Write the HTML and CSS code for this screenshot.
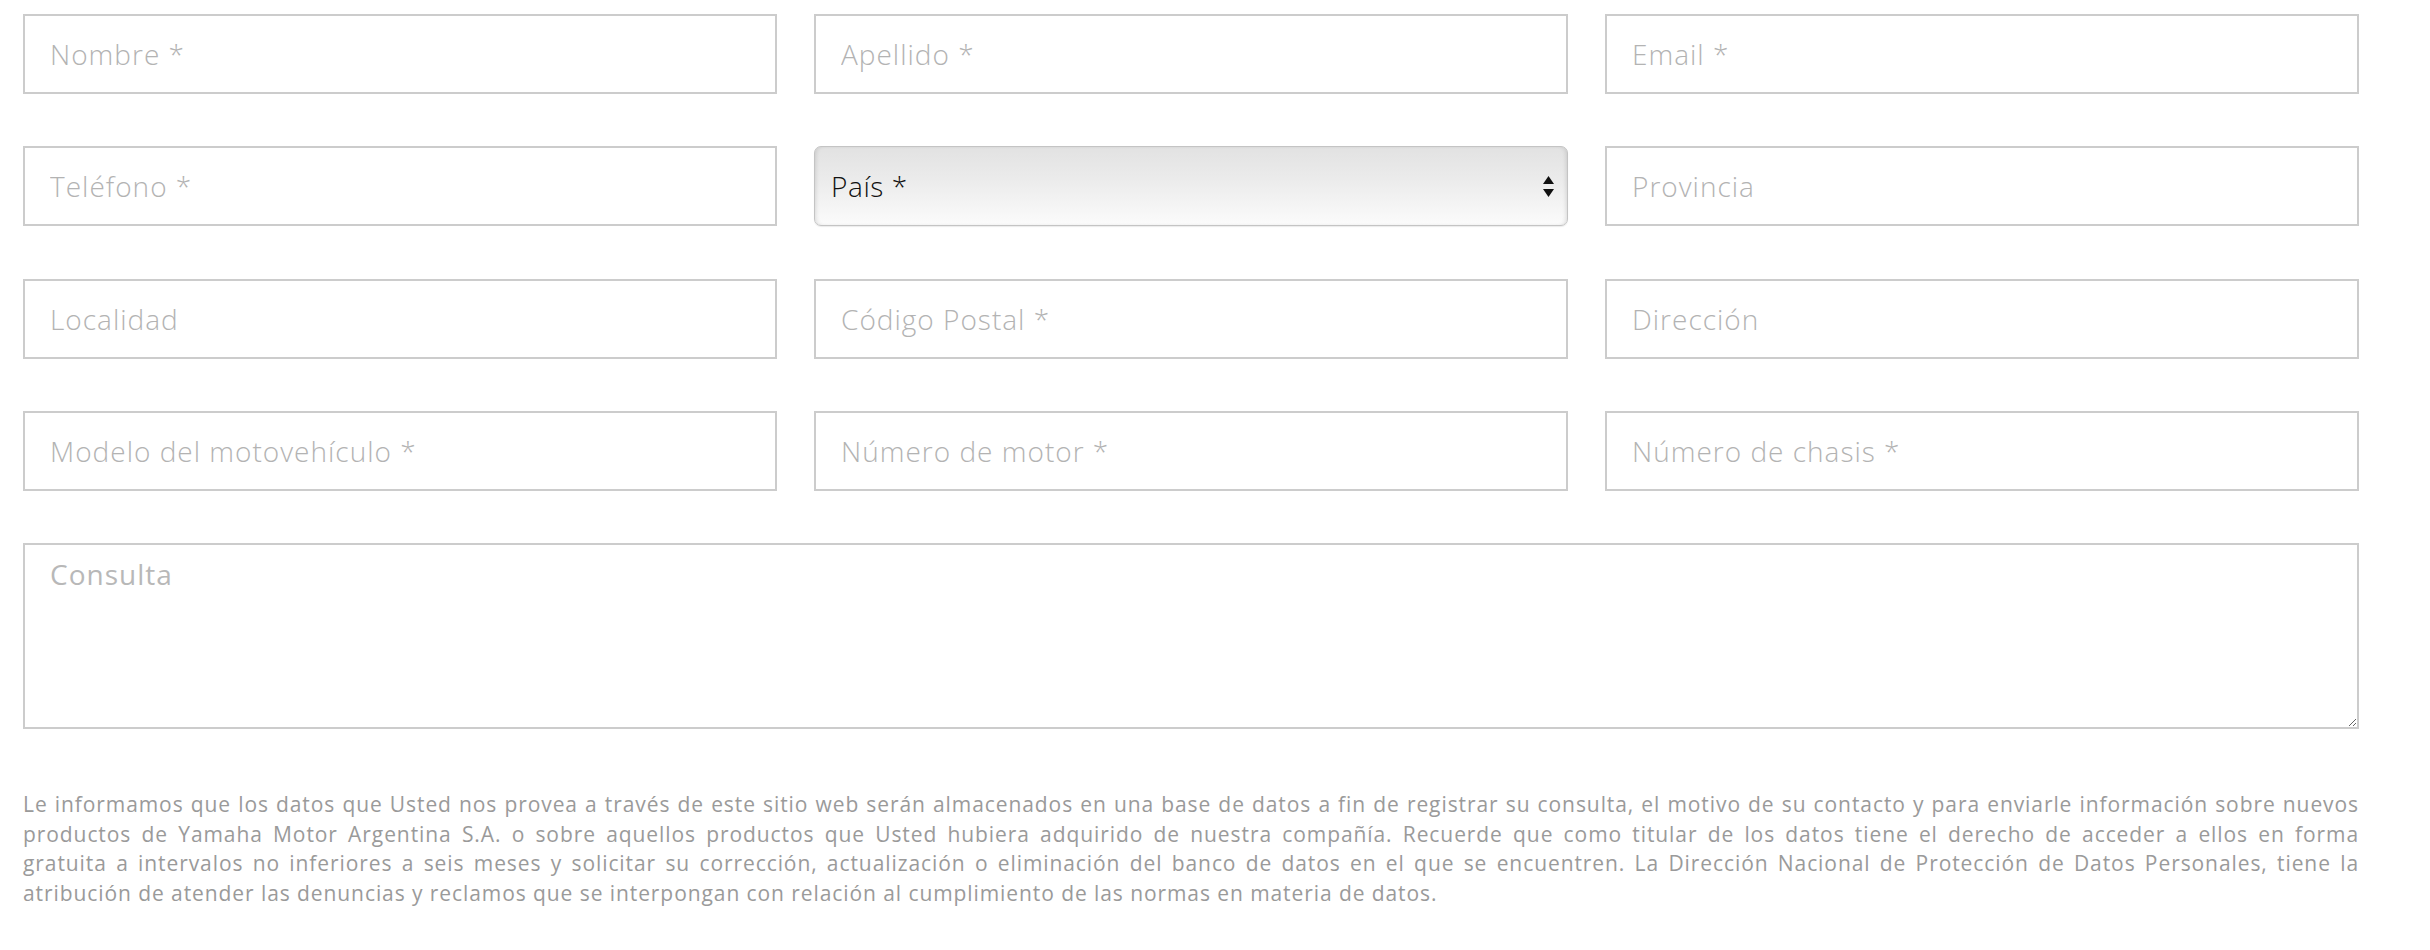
FILE: index.html
```html
<!DOCTYPE html>
<html lang="es">
<head>
<meta charset="utf-8">
<title>Contacto</title>
<link rel="stylesheet" href="styles.css">
</head>
<body>
<form class="form">
  <div class="grid">
    <input class="field" type="text" placeholder="Nombre *">
    <input class="field" type="text" placeholder="Apellido *">
    <input class="field" type="text" placeholder="Email *">
    <input class="field" type="text" placeholder="Teléfono *">
    <div class="select-wrap">
      <select class="select">
        <option>País *</option>
      </select>
      <svg class="select-arrow" width="11" height="21" viewBox="0 0 11 21" aria-hidden="true">
        <polygon points="5.5,0 11,8 0,8" fill="#111"/>
        <polygon points="0,13 11,13 5.5,21" fill="#111"/>
      </svg>
    </div>
    <input class="field" type="text" placeholder="Provincia">
    <input class="field" type="text" placeholder="Localidad">
    <input class="field" type="text" placeholder="Código Postal *">
    <input class="field" type="text" placeholder="Dirección">
    <input class="field" type="text" placeholder="Modelo del motovehículo *">
    <input class="field" type="text" placeholder="Número de motor *">
    <input class="field" type="text" placeholder="Número de chasis *">
  </div>
  <textarea class="message" placeholder="Consulta"></textarea>
  <p class="legal">
    <span class="ln">Le informamos que los datos que Usted nos provea a través de este sitio web serán almacenados en una base de datos a fin de registrar su consulta, el motivo de su contacto y para enviarle información sobre nuevos</span>
    <span class="ln">productos de Yamaha Motor Argentina S.A. o sobre aquellos productos que Usted hubiera adquirido de nuestra compañía. Recuerde que como titular de los datos tiene el derecho de acceder a ellos en forma</span>
    <span class="ln">gratuita a intervalos no inferiores a seis meses y solicitar su corrección, actualización o eliminación del banco de datos en el que se encuentren. La Dirección Nacional de Protección de Datos Personales, tiene la</span>
    <span class="ln last">atribución de atender las denuncias y reclamos que se interpongan con relación al cumplimiento de las normas en materia de datos.</span>
  </p>
</form>
</body>
</html>
```

FILE: styles.css
```css
html, body {
  margin: 0;
  padding: 0;
  background: #ffffff;
}

body {
  font-family: "Open Sans", "Liberation Sans", sans-serif;
}

.form {
  box-sizing: border-box;
  width: 2359px;
  padding: 14px 0 0 23px;
  margin: 0;
}

.grid {
  display: grid;
  grid-template-columns: repeat(3, 1fr);
  column-gap: 37px;
  row-gap: 52.3px;
}

.field {
  box-sizing: border-box;
  width: 100%;
  height: 80px;
  margin: 0;
  border: 2px solid #cccccc;
  border-radius: 0;
  background: #ffffff;
  padding: 0 0 0 25px;
  font-family: "Open Sans", "Liberation Sans", sans-serif;
  font-size: 28px;
  font-weight: 300;
  letter-spacing: 1px;
  color: #333333;
  outline: none;
}

.field::placeholder {
  color: #b3b3b3;
  opacity: 1;
}

.select-wrap {
  position: relative;
  height: 80px;
}

.select {
  -webkit-appearance: none;
  appearance: none;
  box-sizing: border-box;
  width: 100%;
  height: 80px;
  margin: 0;
  border: 1px solid #c4c4c4;
  border-radius: 7px;
  padding: 0 0 0 16px;
  background: linear-gradient(to bottom, #e2e2e2 0%, #ececec 45%, #fbfbfb 100%);
  box-shadow: inset 3px 0 4px -2px rgba(0, 0, 0, 0.12), inset -3px 0 4px -2px rgba(0, 0, 0, 0.12), 0 1px 1px rgba(0, 0, 0, 0.08);
  font-family: "Open Sans", "Liberation Sans", sans-serif;
  font-size: 28px;
  font-weight: 300;
  letter-spacing: 0.6px;
  color: #111111;
  outline: none;
}

.select-arrow {
  position: absolute;
  right: 14px;
  top: 30px;
  pointer-events: none;
}

.message {
  display: block;
  box-sizing: border-box;
  width: 100%;
  height: 186px;
  margin: 52px 0 0 0;
  border: 2px solid #cccccc;
  border-radius: 0;
  padding: 10px 25px;
  font-family: "Open Sans", "Liberation Sans", sans-serif;
  font-size: 28px;
  font-weight: 400;
  letter-spacing: 1px;
  color: #333333;
  outline: none;
  resize: both;
}

.message::placeholder {
  color: #b8b8b8;
  opacity: 1;
}

.legal {
  margin: 61px 0 0 0;
  font-size: 21px;
  line-height: 29.7px;
  font-weight: 400;
  letter-spacing: 0.92px;
  color: #9a9a9a;
}

.ln {
  display: block;
  text-align: justify;
  text-align-last: justify;
}

.ln.last {
  text-align-last: left;
}
```
